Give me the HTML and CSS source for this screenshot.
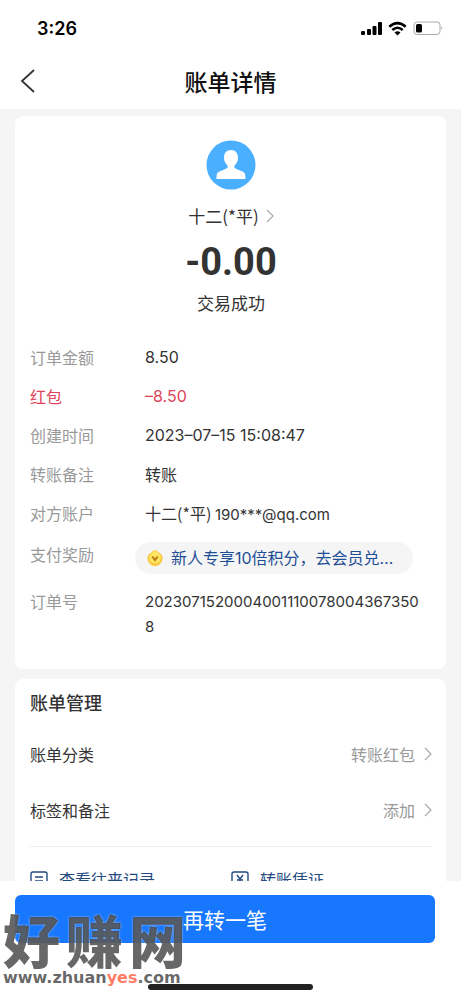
FILE: index.html
```html
<!DOCTYPE html>
<html lang="zh-CN">
<head>
<meta charset="utf-8">
<meta name="viewport" content="width=device-width, initial-scale=1">
<title>账单详情</title>
<link rel="stylesheet" href="styles.css">
</head>
<body>
<div class="screen">
  <div class="status-bar">
    <span class="clock">3:26</span>
    <svg class="status-icons" viewBox="0 0 84 16" aria-hidden="true">
      <g fill="#000">
        <rect x="1" y="10" width="4" height="4" rx="1"/>
        <rect x="7" y="8" width="4" height="6" rx="1"/>
        <rect x="12.500" y="5" width="4" height="9" rx="1"/>
        <rect x="18" y="1" width="4" height="13" rx="1"/>
        <path d="m37.500 14.500-3-3q3-2.500 6 0z"/>
      </g>
      <path d="M29.300 5.700Q37.500-1.500 45.700 5.700M32.300 9Q37.500 4.500 42.700 9" fill="none" stroke="#000" stroke-width="2.600"/>
      <rect x="54" y="1" width="26" height="12.500" rx="3" fill="#fff" stroke="#aaa"/>
      <rect x="56" y="3" width="6" height="8.500" rx="1.500"/>
      <path d="M81.500 5v4q1.500-2 0-4" fill="#888"/>
    </svg>
  </div>
  <header class="nav">
    <button class="back" aria-label="返回">
      <svg viewBox="0 0 16 26"><path d="M14 2 2 13l12 11" fill="none" stroke="#333" stroke-width="1.800"/></svg>
    </button>
    <h1 class="nav-title">账单详情</h1>
  </header>

  <main class="content">
    <section class="card">
      <div class="summary">
        <svg class="avatar" viewBox="0 0 50 50" aria-hidden="true">
          <circle cx="25" cy="25" r="24.500" fill="#4bafff"/>
          <path d="M25 10c-4.500 0-7 3-7 7.500 0 4 1.500 6 3.500 8 .8 1.500 0 2.500-2 3.500l-6 2.500c-2.500 1-3 2.500-3 7.500h29c0-5-.5-6.500-3-7.500l-6-2.500c-2-1-2.800-2-2-3.500 2-2 3.500-4 3.500-8 0-4.500-2.500-7.500-7-7.500z" fill="#fff"/>
        </svg>
        <a class="payee" href="#payee">十二(*平)
          <svg class="chevron" viewBox="0 0 8 14"><path d="m1 1 6 6-6 6"/></svg>
        </a>
        <strong class="amount">-0.00</strong>
        <span class="state">交易成功</span>
      </div>
      <dl class="details">
        <dt>订单金额</dt><dd class="latin">8.50</dd>
        <dt class="red">红包</dt><dd class="latin red">–8.50</dd>
        <dt>创建时间</dt><dd class="latin">2023–07–15 15:08:47</dd>
        <dt>转账备注</dt><dd>转账</dd>
        <dt>对方账户</dt><dd>十二(*平) <span class="latin account">190***@qq.com</span></dd>
        <dt>支付奖励</dt>
        <dd class="reward-cell">
          <a class="reward" href="#reward">
            <svg class="coin" viewBox="0 0 18 18" aria-hidden="true">
              <path d="M9 1q2 .3 3.500 2.500 4 1.500 4 6A7.500 7.500 0 0 1 1.500 9.500q0-4.500 4-6Q7 1.300 9 1z" fill="#f8c43a"/>
              <path d="M9 1.500q2 .5 3 2.500 3 1.500 3 5a6 5.500 0 0 1-12 0q0-3.500 3-5 1-2 3-2.500z" fill="#ffe563"/>
              <path d="m6.300 7.500 2.700 3.500 2.700-3.500" fill="none" stroke="#bd7a12" stroke-width="2"/>
            </svg>
            <span class="reward-text">新人专享10倍积分，去会员兑…</span>
          </a>
        </dd>
        <dt>订单号</dt><dd class="latin order">20230715200040011100780043673508</dd>
      </dl>
    </section>

    <section class="card manage">
      <h2 class="manage-title">账单管理</h2>
      <a class="row" href="#category"><span>账单分类</span><span class="row-value">转账红包
        <svg class="chevron" viewBox="0 0 8 14"><path d="m1 1 6 6-6 6"/></svg></span></a>
      <a class="row" href="#tags"><span>标签和备注</span><span class="row-value">添加
        <svg class="chevron" viewBox="0 0 8 14"><path d="m1 1 6 6-6 6"/></svg></span></a>
      <div class="links">
        <a class="link" href="#history">
          <svg class="link-icon" viewBox="0 0 18 18"><path d="M3 2h12q2 0 2 2v10q0 2-2 2H3q-2 0-2-2V4q0-2 2-2zM5 7h8M5 11h8"/></svg>
          查看往来记录</a>
        <a class="link" href="#voucher">
          <svg class="link-icon" viewBox="0 0 18 18"><path d="M3 2h12q2 0 2 2v10q0 2-2 2H3q-2 0-2-2V4q0-2 2-2zM6 5l3 4 3-4M9 9v5M6 10h6"/></svg>
          转账凭证</a>
      </div>
    </section>
  </main>

  <footer class="footer">
    <button class="again">再转一笔</button>
    <div class="home-bar"></div>
    <div class="watermark">
      <span class="mark-name"><span>好</span><span>赚</span><span>网</span></span>
      <span class="mark-url">www.zhuan<span class="mark-accent">yes</span>.com</span>
    </div>
  </footer>
</div>
</body>
</html>
```
FILE: styles.css
```css
* { box-sizing: border-box; }
body {
  margin: 0;
  background: #f5f5f5;
  color: #333;
  font: 16px/24px "Noto Sans CJK SC", sans-serif;
}
a { color: inherit; text-decoration: none; }
button { border: 0; padding: 0; font: inherit; }
svg { display: block; flex: none; }

.screen { display: flex; flex-direction: column; height: 100vh; }
.status-bar {
  display: flex;
  justify-content: space-between;
  align-items: center;
  height: 52px;
  padding: 5px 17px 0 37px;
  background: #fff;
}
.clock { font: 600 18px/24px Inter, sans-serif; color: #000; }
.status-icons { width: 84px; height: 16px; }

.nav {
  display: grid;
  grid-template-columns: 56px 1fr 56px;
  align-items: center;
  height: 57px;
  background: #fff;
}
.back { justify-self: start; margin-left: 20px; background: none; }
.back svg { width: 16px; height: 26px; }
.nav-title {
  margin: 0;
  text-align: center;
  font-size: 23px;
  line-height: 32px;
  font-weight: 500;
  color: #111;
}

.content {
  flex: 1;
  min-height: 0;
  overflow: hidden;
  display: flex;
  flex-direction: column;
  gap: 10px;
  padding: 7px 15px 0;
}
.card { flex: none; padding: 0 14px 0 15px; border-radius: 8px; background: #fff; }
.summary {
  display: flex;
  flex-direction: column;
  align-items: center;
  padding-top: 24px;
}
.avatar { width: 50px; height: 50px; }
.payee {
  display: flex;
  align-items: center;
  gap: 7px;
  margin-top: 14px;
  font-size: 17px;
}
.chevron { width: 8px; height: 14px; fill: none; stroke: #aaa; stroke-width: 1.2px; }
.amount { margin-top: 10px; font: 700 38px/48px Roboto, sans-serif; }
.state { margin-top: 5px; font-size: 17px; }

.details {
  display: grid;
  grid-template-columns: 115px 1fr;
  row-gap: 15px;
  margin: 0;
  padding: 30px 0;
}
.details dt { color: #999; }
.details dd { margin: 0; min-width: 0; }
.details .red { color: #e0445b; }
.latin { font-family: Inter, sans-serif; }
.account { font-size: 15px; }
.order { padding-right: 4px; font-size: 15px; line-height: 25px; overflow-wrap: anywhere; }
.reward-cell { display: flex; }
.reward {
  display: flex;
  align-items: center;
  gap: 7px;
  height: 32px;
  margin-left: -10px;
  padding: 0 20px 0 11px;
  border-radius: 16px;
  background: #f5f5f5;
  color: #1f4e96;
}
.coin { width: 18px; height: 18px; }
.reward-text { font-family: Inter, "Noto Sans CJK SC", sans-serif; }

.manage { padding-top: 10px; }
.manage-title { margin: 0 0 11px; font-size: 18px; line-height: 26px; font-weight: 500; }
.row { display: flex; justify-content: space-between; align-items: center; height: 56px; }
.row-value { display: flex; align-items: center; gap: 9px; color: #999; }
.links {
  display: grid;
  grid-template-columns: 1fr 1fr;
  margin-top: 8px;
  padding: 20px 0;
  border-top: 1px solid #eee;
  color: #244a80;
}
.link { display: flex; align-items: center; gap: 11px; }
.link-icon { width: 18px; height: 18px; fill: none; stroke: currentColor; stroke-width: 1.4px; }

.footer {
  position: relative;
  display: flex;
  flex-direction: column;
  padding: 14px 26px 10px 15px;
  background: #fff;
}
.again {
  height: 48px;
  border-radius: 6px;
  background: #1877ff;
  color: #fff;
  font-size: 21px;
}
.home-bar {
  align-self: center;
  width: 165px;
  height: 6px;
  margin: 41px 0 0 11px;
  border-radius: 3px;
  background: #222;
}
.watermark {
  position: absolute;
  left: 3px;
  bottom: 13px;
  display: flex;
  flex-direction: column;
  pointer-events: none;
  color: rgba(45, 45, 45, 0.72);
}
.mark-name {
  display: flex;
  gap: 6px;
  font-size: 57px;
  line-height: 62px;
  font-weight: 900;
  text-shadow: 0 0 2px rgba(255, 255, 255, 0.7);
}
.mark-url { font: 700 16px/18px "DejaVu Sans", sans-serif; }
.mark-accent { color: #ff7d66; }
```
